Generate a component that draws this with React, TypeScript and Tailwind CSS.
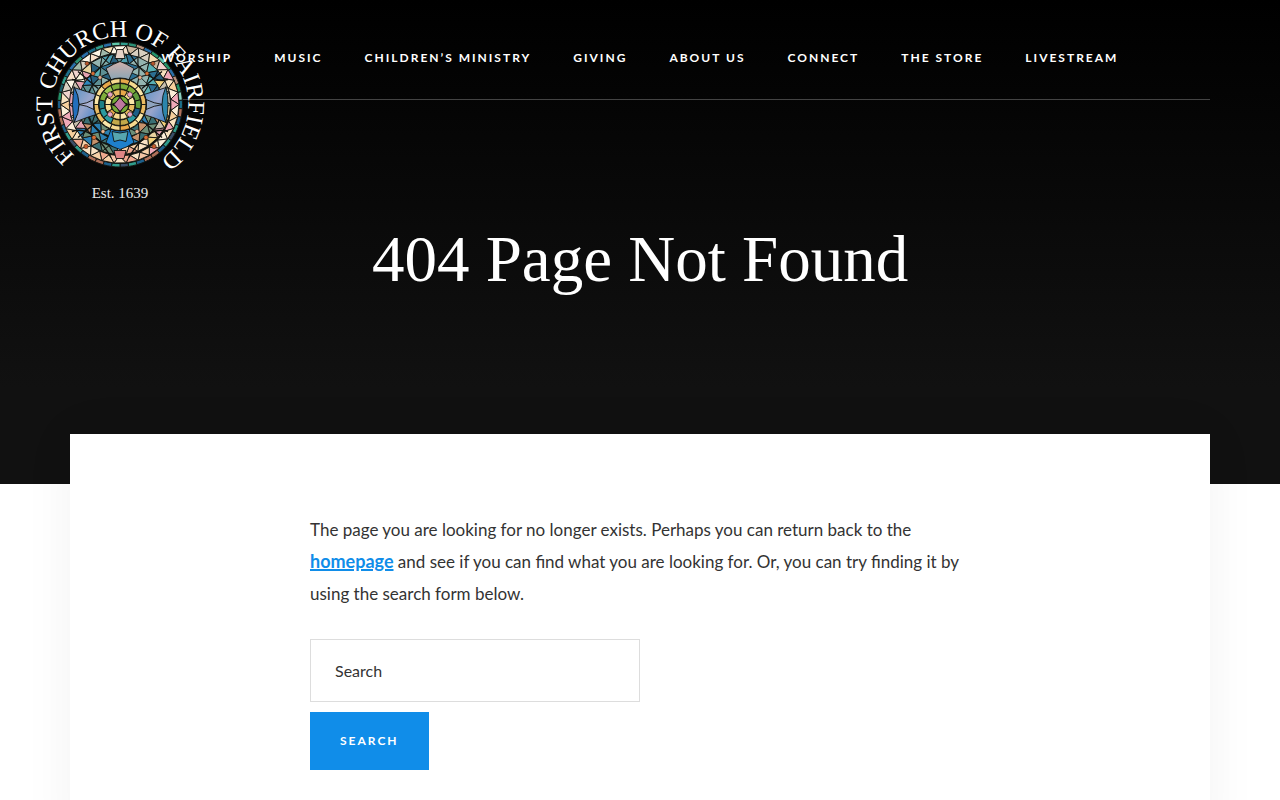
const navItems = [
  "Worship",
  "Music",
  "Children’s Ministry",
  "Giving",
  "About Us",
  "Connect",
  "The Store",
  "Livestream",
];

// glass colours
const rim = ["#2f9c8c", "#1d5f6a", "#5fc7a8", "#1d6f8a", "#23936a", "#b9927c", "#2c8f74", "#8ad0c0", "#2a6fa8"];
const rimLow = ["#2f9c8c", "#b0705a", "#3fae88", "#1d5f8a", "#d08a6a", "#2c8f74", "#3a4f68"];
const cream = ["#f6dfc8", "#c9b59c", "#fdf6e6", "#e3bdae", "#9fb7a8", "#f4dcb0", "#d8cfc0", "#efd3cd"];
const peach = ["#efa98f", "#f7d0a8", "#dd8a68", "#f9e2c4", "#f0b07c", "#d99a90", "#f3c4a4"];
const rose = ["#f0a9b8", "#f7e2c0", "#d98aa4", "#fbeed8", "#e8b7b0", "#c6a8b8", "#f6cf9c"];
const lemon = ["#fbeeb4", "#e9d3a0", "#fdf8de", "#e5a3b1", "#f2d17c", "#c8bfae"];
const teal = ["#4f9fb0", "#2c6f92", "#7fa9a8", "#2f87bc", "#5d8f94", "#59b0b4", "#93b4b0", "#285f7c"];
const moss = ["#6d8f78", "#2c7fb2", "#8f9f60", "#3a6f74", "#a9a474", "#2b68a0", "#c6926c"];
const gold = ["#e8a84a", "#f6d98f", "#e9bb62", "#dd9440", "#fae6a8"];
const greens = ["#7fae3c", "#9cc653", "#5f9a3d"];
const deep = ["#1f7f86", "#2b9aa0", "#1c5f86", "#c3a94a"];

const jitter = (i: number) => Math.sin(i * 12.9 + 4) * 0.8;

const polar = (r: number, deg: number) => {
  const a = ((deg - 90) * Math.PI) / 180;
  return `${(r * Math.cos(a)).toFixed(2)} ${(r * Math.sin(a)).toFixed(2)}`;
};

const pick = (colors: string[], i: number) => colors[(i * 5 + ((i * i) % 7)) % colors.length];

// palettes split the circle evenly, clockwise from the top
type RingProps = { inner: number; outer: number; count: number; palettes: string[][] };

const paletteAt = (palettes: string[][], deg: number) => palettes[Math.floor(((deg % 360) / 360) * palettes.length)];

const Ring = ({ inner, outer, count, palettes }: RingProps) => {
  const step = 360 / count;
  return (
    <>
      {Array.from({ length: count }, (_, i) => {
        const a = i * step;
        const b = a + step;
        return (
          <path
            key={i}
            d={`M${polar(inner, a)}L${polar(outer, a)}A${outer} ${outer} 0 0 1 ${polar(outer, b)}L${polar(inner, b)}A${inner} ${inner} 0 0 0 ${polar(inner, a)}Z`}
            fill={pick(paletteAt(palettes, a), i)}
          />
        );
      })}
    </>
  );
};

const Zigzag = ({ inner, outer, count, palettes }: RingProps) => {
  const step = 360 / count;
  const low = (i: number) => polar(inner + jitter(i % count), (i % count) * step + jitter(i % count) * 2);
  const high = (i: number) => polar(outer + jitter((i % count) + 9) * 0.5, ((i % count) + 0.5) * step);
  return (
    <>
      {Array.from({ length: count }, (_, i) => {
        const colors = paletteAt(palettes, i * step);
        return (
          <g key={i}>
            <path d={`M${low(i)}L${high(i)}L${low(i + 1)}Z`} fill={pick(colors, i)} />
            <path d={`M${high(i)}L${low(i + 1)}L${high(i + 1)}Z`} fill={pick(colors, i + 3)} />
          </g>
        );
      })}
    </>
  );
};

const Logo = () => (
  <svg viewBox="0 0 180 190" className="h-[190px] w-[180px]" role="img" aria-label="First Church of Fairfield, Est. 1639">
    <defs>
      <path id="ring-text" d="M45 145.5A68 68 0 1 1 136 145" />
      <linearGradient id="sky" x1="0" y1="0" x2="1" y2="1">
        <stop offset="0" stopColor="#5b93c4" />
        <stop offset="0.5" stopColor="#9aa6cc" />
        <stop offset="1" stopColor="#3d80c8" />
      </linearGradient>
      <linearGradient id="mist" x1="0" y1="0" x2="0" y2="1">
        <stop offset="0" stopColor="#d0b0ac" />
        <stop offset="1" stopColor="#8aa5b5" />
      </linearGradient>
    </defs>
    <g transform="translate(90 94.5)" stroke="#11120f" strokeWidth="0.9" strokeLinejoin="round">
      <circle r="63" fill="#11120f" stroke="none" />
      <Ring inner={59} outer={62.5} count={46} palettes={[rim, rimLow, rimLow, rim]} />
      <Zigzag inner={51} outer={59} count={30} palettes={[cream, rose, rose, peach, peach, rose, cream, cream]} />
      <Zigzag inner={42} outer={50.5} count={26} palettes={[teal, lemon, lemon, peach, moss, lemon, lemon, teal]} />
      <Zigzag inner={34} outer={42} count={20} palettes={[teal, moss, moss, teal]} />
      <Zigzag inner={26} outer={34} count={16} palettes={[teal, moss, moss, teal]} />

      {/* star points */}
      <path d="M-24-10Q-34-13-46-17Q-42-9-41 0Q-42 9-46 18Q-34 13-24 10Z" fill="url(#sky)" />
      <path d="M24-10Q34-13 46-17Q43-9 43 0Q43 9 46 18Q34 13 24 10Z" fill="url(#sky)" />
      <path d="M-41 0Q-33-1-26-5V5Q-33 1-41 0Z" fill="#a9b0d4" />
      <path d="M43 0Q34-1 26-5V5Q34 1 43 0Z" fill="#8fa4c0" />
      <path d="M-46-18Q-41-9-41 0T-46 18Q-49 0-46-18Z" fill="#236fbd" />
      <path d="M46-18Q42-9 42 0T46 18Q50 0 46-18Z" fill="#2c86ac" />
      <path d="M-9-25L-14-36Q-6-41 0-43Q6-41 14-36L9-25Z" fill="url(#mist)" />
      <path d="M-9 25L-14 38Q-7 43 0 45Q7 43 14 38L9 25Z" fill="#1f80cc" />
      <path d="M-8 27Q0 30 8 27L6 37Q0 34-6 37Z" fill="#56a6b0" />
      <path d="M-6 46H6L4 54H-4Z" fill="#df8585" />
      <path d="M-5-46H5L3-55H-3Z" fill="#e8d4c8" />

      {/* leading between the points */}
      <path
        d="M-48-25Q-28-20-9-52M48-25Q28-20 9-52M-48 27Q-28 20-9 53M48 27Q28 20 9 53M-42-33L-22-16M42-33L22-16M-42 33L-22 16M42 33L22 16"
        fill="none"
        strokeWidth="1.4"
      />

      {[-1, 1].map((s) => (
        <g key={s} fill="#d96f36" strokeWidth="0.5">
          <circle cx={s * 27} cy="-31" r="2" />
          <circle cx={s * 33} cy="-41" r="2" fill="#b9562b" />
          <circle cx={s * 20} cy="-27" r="2" fill="#e5a98b" />
          <circle cx={s * 26} cy="33" r="2.2" />
          <circle cx={s * 34} cy="42" r="2.2" fill="#c65a2b" />
          <circle cx={s * 17} cy="27" r="2" fill="#efb690" />
        </g>
      ))}

      <circle r="26.5" fill="#11120f" />
      <Ring inner={21.5} outer={26} count={16} palettes={[gold]} />
      <Ring inner={15.5} outer={21} count={14} palettes={[greens, deep, deep, greens]} />
      <Ring inner={9} outer={15} count={12} palettes={[gold]} />
      <circle r="9" fill="#191a12" />
      {[45, 135, 225, 315].map((deg) => (
        <g key={deg} transform={`rotate(${deg})`}>
          <path d="M-6-6Q0-12 6-6Q0-3-6-6Z" fill="#76ab38" />
          <circle cy="-14" r="2.6" fill="#e7a3c4" strokeWidth="0.6" />
        </g>
      ))}
      <path d="M0-7L6 0L0 7L-6 0Z" fill="#bd789f" />
    </g>
    <text fill="#fff" fontFamily="'Liberation Serif', serif" fontSize="24">
      <textPath href="#ring-text">FIRST CHURCH OF FAIRFIELD</textPath>
    </text>
    <text x="90" y="188" textAnchor="middle" fill="#e8e8e8" fontFamily="'Liberation Serif', serif" fontSize="15">
      Est. 1639
    </text>
  </svg>
);

const Header = () => (
  <header className="relative mx-auto max-w-[1140px] border-b border-[#444]">
    <a href="#" className="absolute top-[10px] -left-10">
      <Logo />
    </a>
    <nav className="pointer-events-none relative flex h-[99px] items-center justify-center pt-4">
      <ul className="pointer-events-auto flex gap-[42px]">
        {navItems.map((item) => (
          <li key={item}>
            <a href="#" className="block text-xs leading-5 font-bold tracking-[2px] whitespace-nowrap uppercase">
              {item}
            </a>
          </li>
        ))}
      </ul>
    </nav>
  </header>
);

const App = () => {
  return (
    <div className="min-h-screen overflow-x-hidden bg-white font-['Lato',sans-serif] text-[#333]">
      <div className="bg-linear-to-b/srgb from-black to-[#111] to-80% px-5 pb-[185px] text-white">
        <Header />
        <h1 className="pt-[119px] text-center font-['Liberation_Serif',serif] text-[65px] leading-[80px]">
          404 Page Not Found
        </h1>
      </div>
      <main className="relative mx-auto -mt-[50px] max-w-[1140px] bg-white px-10 py-20 shadow-[0_0_50px_rgba(0,0,0,0.05)]">
        <div className="mx-auto max-w-[660px]">
          <p className="mb-[29px] text-[17px] leading-8">
            The page you are looking for no longer exists. Perhaps you can return back to the{" "}
            <a href="#" className="text-[18px] leading-5 font-bold text-[#108de9] underline decoration-2">
              homepage
            </a>{" "}
            and see if you can find what you are looking for. Or, you can try finding it by using the search form below.
          </p>
          <form onSubmit={(e) => e.preventDefault()}>
            <input
              type="search"
              aria-label="Search"
              placeholder="Search"
              className="mb-[10px] block h-[63px] w-1/2 border border-[#ddd] px-6 text-base placeholder:text-[#333]"
            />
            <button type="submit" className="h-[58px] bg-[#108de9] px-[30px] text-xs font-bold tracking-[2px] text-white uppercase">
              Search
            </button>
          </form>
        </div>
      </main>
    </div>
  );
};

export default App;
